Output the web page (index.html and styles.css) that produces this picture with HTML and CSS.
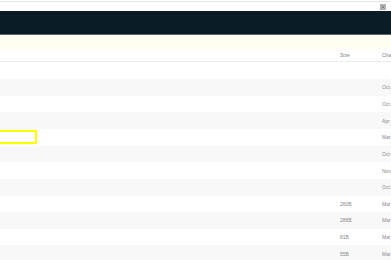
FILE: index.html
```html
<!DOCTYPE html>
<html>
<head>
<meta charset="utf-8">
<link rel="stylesheet" href="styles.css">
</head>
<body>
<div class="page">
  <div class="topbar">
    <svg class="close" width="6" height="6" viewBox="0 0 6 6"><rect x="0" y="0" width="6" height="6" fill="#b4b4b4"/><path d="M1.5 1.5 L4.5 4.5 M4.5 1.5 L1.5 4.5" stroke="#8a8a8a" stroke-width="1"/></svg>
  </div>
  <div class="navbar"></div>
  <div class="notice"></div>
  <div class="table">
    <div class="row head"><div class="c name"></div><div class="c size">Size</div><div class="c date">Changed</div></div>
    <div class="row"><div class="c name"></div><div class="c size"></div><div class="c date"></div></div>
    <div class="row alt"><div class="c name"></div><div class="c size"></div><div class="c date">Oct 14, 2021</div></div>
    <div class="row"><div class="c name"></div><div class="c size"></div><div class="c date">Oct 14, 2021</div></div>
    <div class="row alt"><div class="c name"></div><div class="c size"></div><div class="c date">Apr 02, 2022</div></div>
    <div class="row"><div class="c name"><span class="focus"></span></div><div class="c size"></div><div class="c date">Mar 20, 2023</div></div>
    <div class="row alt"><div class="c name"></div><div class="c size"></div><div class="c date">Oct 14, 2021</div></div>
    <div class="row"><div class="c name"></div><div class="c size"></div><div class="c date">Nov 08, 2021</div></div>
    <div class="row alt"><div class="c name"></div><div class="c size"></div><div class="c date">Oct 14, 2021</div></div>
    <div class="row"><div class="c name"></div><div class="c size">260B</div><div class="c date">Mar 20, 2023</div></div>
    <div class="row alt"><div class="c name"></div><div class="c size">286B</div><div class="c date">Mar 20, 2023</div></div>
    <div class="row"><div class="c name"></div><div class="c size">81B</div><div class="c date">Mar 20, 2023</div></div>
    <div class="row alt"><div class="c name"></div><div class="c size">55B</div><div class="c date">Mar 20, 2023</div></div>
  </div>
</div>
</body>
</html>
```
FILE: styles.css
```css
html, body {
  margin: 0;
  padding: 0;
  background: #ffffff;
  overflow: hidden;
}
.page {
  width: 391px;
  height: 260px;
  overflow: hidden;
  font-family: "Liberation Sans", Arial, sans-serif;
  font-size: 5px;
  color: #888888;
}
.topbar {
  margin-top: 1px;
  border-top: 1px solid #dfe7ef;
  height: 9px;
  display: flex;
  justify-content: flex-end;
  align-items: flex-start;
  padding-right: 5px;
}
.close {
  display: block;
  margin-top: 2px;
}
.navbar {
  height: 23px;
  background: #0b1c27;
  border-bottom: 1px solid #56656d;
}
.notice {
  height: 14px;
  background: #fffef0;
}
.table {
  width: 460px;
}
.row {
  display: grid;
  grid-template-columns: 340px 42px 80px;
  height: 16.65px;
  align-items: center;
  background: #ffffff;
}
.row.alt {
  background: #f8f8f8;
}
.row.head {
  height: 12.4px;
  border-bottom: 1px solid #ececec;
  color: #7f7f7f;
}
.c {
  white-space: nowrap;
  overflow: hidden;
  line-height: 6px;
}
.name {
  overflow: visible;
  position: relative;
}
.focus {
  display: block;
  width: 42px;
  height: 14px;
  margin-left: -5px;
  box-sizing: border-box;
  border: 2px solid #ffff00;
  box-shadow: 0 0 1px #ffff66;
}
```
